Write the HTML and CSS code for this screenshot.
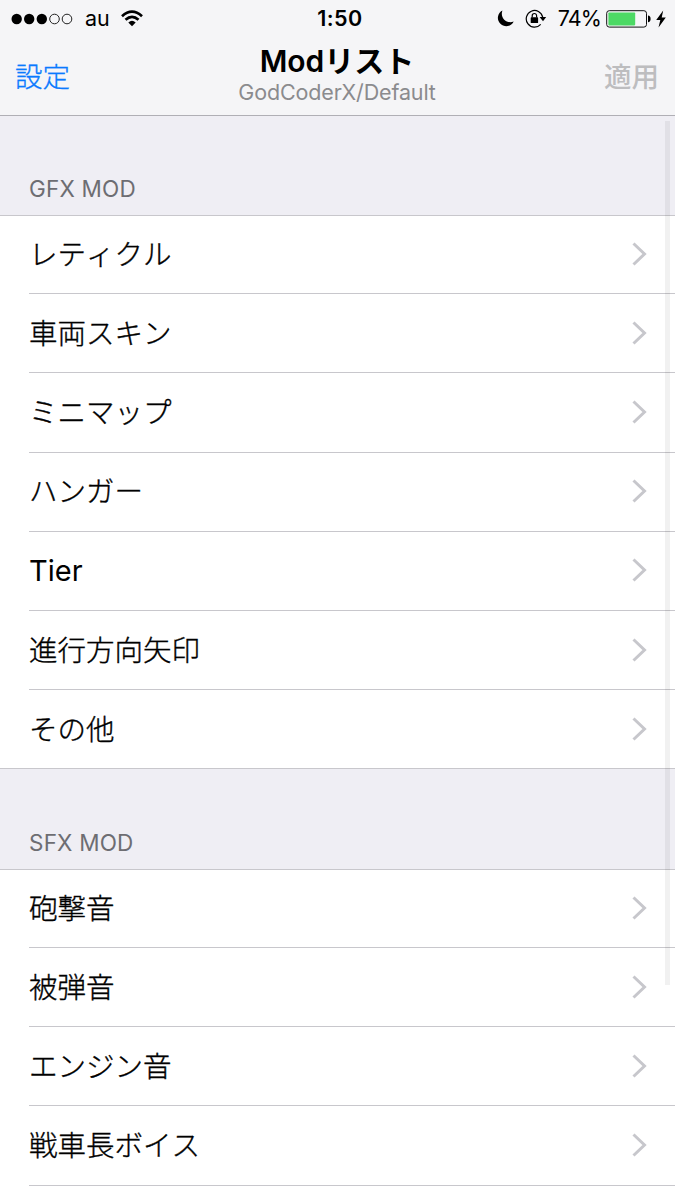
FILE: index.html
```html
<!DOCTYPE html>
<html lang="ja">
<head>
<meta charset="utf-8">
<title>Modリスト</title>
<link rel="stylesheet" href="styles.css">
</head>
<body>
<div class="screen">
  <header class="header">
    <div class="status">
      <div class="status-left">
        <svg class="signal" width="62" height="12" viewBox="0 0 62 12"><g fill="#000"><circle cx="5.7" cy="6" r="5.2"/><circle cx="18.2" cy="6" r="5.2"/><circle cx="30.8" cy="6" r="5.2"/></g><g fill="none" stroke="#222" stroke-width="1"><circle cx="43.5" cy="6" r="4.8"/><circle cx="56" cy="6" r="4.8"/></g></svg>
        <span class="carrier">au</span>
        <svg class="wifi" width="22" height="17" viewBox="0 0 22 17"><g fill="none" stroke="#000" stroke-width="2.7"><path d="M1 6.2Q11-3 21 6.2"/><path d="M4.5 9.8Q11 3.8 17.5 9.8"/></g><path d="M7.3 12.4Q11 9.2 14.7 12.4L11 16.2Z"/></svg>
      </div>
      <span class="time">1:50</span>
      <div class="status-right">
        <svg class="moon" width="17" height="17" viewBox="0 0 17 17"><path d="M5.4.5A8.3 8.3 0 1 0 16.7 11.4C10.2 14.3 2.6 8.2 5.4.5Z"/></svg>
        <svg class="lock" width="22" height="19" viewBox="0 0 22 19"><path d="M15.7 15.4A8.3 8.3 0 1 1 17.7 8.2" fill="none" stroke="#000" stroke-width="1.2"/><path d="M14.6 8h6.6L18 12.2Z"/><rect x="5.7" y="8.3" width="7.4" height="5.8" rx=".6"/><path d="M7.2 8.6V6.7a2.2 2.2 0 0 1 4.4 0v1.9" fill="none" stroke="#000" stroke-width="1.2"/></svg>
        <span class="percent">74%</span>
        <svg class="battery" width="45" height="18" viewBox="0 0 45 18"><rect x=".7" y=".7" width="39.8" height="16.4" rx="2.6" fill="none" stroke="#111" stroke-width="1"/><rect x="2.4" y="2.4" width="26.8" height="13" rx=".8" fill="#4cd964"/><path d="M42 5.6q2.6.4 2.6 3.3T42 12.2Z"/></svg>
        <svg class="bolt" width="10" height="18" viewBox="0 0 10 18"><path d="M7.2.4.2 10h4.1L2.5 17.4 9.8 7.4H5.7Z"/></svg>
      </div>
    </div>
    <nav class="nav">
      <a class="action back">設定</a>
      <div class="heading">
        <h1 class="title">Modリスト</h1>
        <p class="subtitle">GodCoderX/Default</p>
      </div>
      <a class="action apply">適用</a>
    </nav>
  </header>
  <main>
    <h2 class="section">GFX MOD</h2>
    <ul class="list full-end">
      <li class="row"><div class="cell"><span class="label">レティクル</span><svg class="chevron" viewBox="0 0 15 24"><path d="M1.5 1.5 12.5 12 1.5 22.5"/></svg></div></li>
      <li class="row"><div class="cell"><span class="label">車両スキン</span><svg class="chevron" viewBox="0 0 15 24"><path d="M1.5 1.5 12.5 12 1.5 22.5"/></svg></div></li>
      <li class="row"><div class="cell"><span class="label">ミニマップ</span><svg class="chevron" viewBox="0 0 15 24"><path d="M1.5 1.5 12.5 12 1.5 22.5"/></svg></div></li>
      <li class="row"><div class="cell"><span class="label">ハンガー</span><svg class="chevron" viewBox="0 0 15 24"><path d="M1.5 1.5 12.5 12 1.5 22.5"/></svg></div></li>
      <li class="row"><div class="cell"><span class="label latin">Tier</span><svg class="chevron" viewBox="0 0 15 24"><path d="M1.5 1.5 12.5 12 1.5 22.5"/></svg></div></li>
      <li class="row"><div class="cell"><span class="label">進行方向矢印</span><svg class="chevron" viewBox="0 0 15 24"><path d="M1.5 1.5 12.5 12 1.5 22.5"/></svg></div></li>
      <li class="row"><div class="cell"><span class="label">その他</span><svg class="chevron" viewBox="0 0 15 24"><path d="M1.5 1.5 12.5 12 1.5 22.5"/></svg></div></li>
    </ul>
    <h2 class="section">SFX MOD</h2>
    <ul class="list">
      <li class="row"><div class="cell"><span class="label">砲撃音</span><svg class="chevron" viewBox="0 0 15 24"><path d="M1.5 1.5 12.5 12 1.5 22.5"/></svg></div></li>
      <li class="row"><div class="cell"><span class="label">被弾音</span><svg class="chevron" viewBox="0 0 15 24"><path d="M1.5 1.5 12.5 12 1.5 22.5"/></svg></div></li>
      <li class="row"><div class="cell"><span class="label">エンジン音</span><svg class="chevron" viewBox="0 0 15 24"><path d="M1.5 1.5 12.5 12 1.5 22.5"/></svg></div></li>
      <li class="row"><div class="cell"><span class="label">戦車長ボイス</span><svg class="chevron" viewBox="0 0 15 24"><path d="M1.5 1.5 12.5 12 1.5 22.5"/></svg></div></li>
    </ul>
  </main>
  <div class="scrollbar"></div>
</div>
</body>
</html>
```
FILE: styles.css
```css
* { box-sizing: border-box; }
body, h1, h2, p, ul { margin: 0; padding: 0; }
body { background: #fff; color: #000; font-family: Inter, "Noto Sans CJK JP", sans-serif; }
svg { display: block; flex: none; }
.screen { position: relative; width: 675px; height: 1200px; overflow: hidden; }

.header { height: 116px; background: #f5f5f7; border-bottom: 1px solid #b0afb5; }
.status { display: grid; grid-template-columns: 1fr auto 1fr; height: 37px; align-items: center; font-size: 22px; line-height: 37px; padding: 0 9px 0 11px; }
.status-left, .status-right { display: flex; align-items: center; }
.status-right { justify-content: flex-end; }
.carrier { margin-left: 12px; font-size: 21.5px; }
.wifi { margin-left: 11px; }
.time { font-weight: 600; font-size: 21.5px; letter-spacing: .4px; padding-left: 3px; }
.lock { margin-left: 11px; }
.percent { margin-left: 11px; font-size: 21.5px; letter-spacing: -.9px; }
.battery { margin-left: 5px; }
.bolt { margin-left: 5px; }

.nav { display: grid; grid-template-columns: 1fr auto 1fr; height: 78px; padding: 0 16px 0 15px; }
.action { font-size: 27.5px; line-height: 40px; padding-top: 18px; font-family: "Noto Sans CJK JP", sans-serif; }
.back { color: #0a7aff; font-weight: 300; -webkit-text-stroke: .3px; }
.apply { color: #bdbdbf; font-weight: 500; text-align: right; }
.heading { text-align: center; }
.title { font-size: 30px; line-height: 36px; font-weight: 600; padding-top: 6px; }
.subtitle { font-size: 21.5px; line-height: 26px; color: #8b8b8e; letter-spacing: -.15px; }

.section { display: flex; align-items: flex-end; height: 100px; padding: 0 29px 12px; background: #efeef4; border-bottom: 1px solid #c8c7cc; font-size: 22.5px; line-height: 28px; font-weight: 400; letter-spacing: .2px; color: #6d6d72; }
.list { list-style: none; }
.row { height: 79.2px; padding-left: 29px; }
.row:first-child { height: 78.2px; }
.cell { display: flex; align-items: center; justify-content: space-between; height: 100%; padding-right: 28px; border-bottom: 1px solid #c8c7cc; }
.full-end .row:last-child { height: 78.8px; border-bottom: 1px solid #c8c7cc; }
.full-end .row:last-child .cell { border-bottom: 0; }
.full-end + .section { height: 101px; }
.label { font: 300 28.5px/40px "Noto Sans CJK JP", sans-serif; font-kerning: none; padding-bottom: 3px; -webkit-text-stroke: .35px #000; }
.latin { font-family: Inter, sans-serif; font-weight: 400; font-size: 29px; padding-bottom: 0; -webkit-text-stroke: 0; }
.chevron { width: 15px; height: 24px; margin-bottom: 1px; fill: none; stroke: #c7c7cc; stroke-width: 3; }
.scrollbar { position: absolute; top: 121px; right: 5px; width: 5px; height: 864px; background: rgba(0, 0, 0, .055); }
```
